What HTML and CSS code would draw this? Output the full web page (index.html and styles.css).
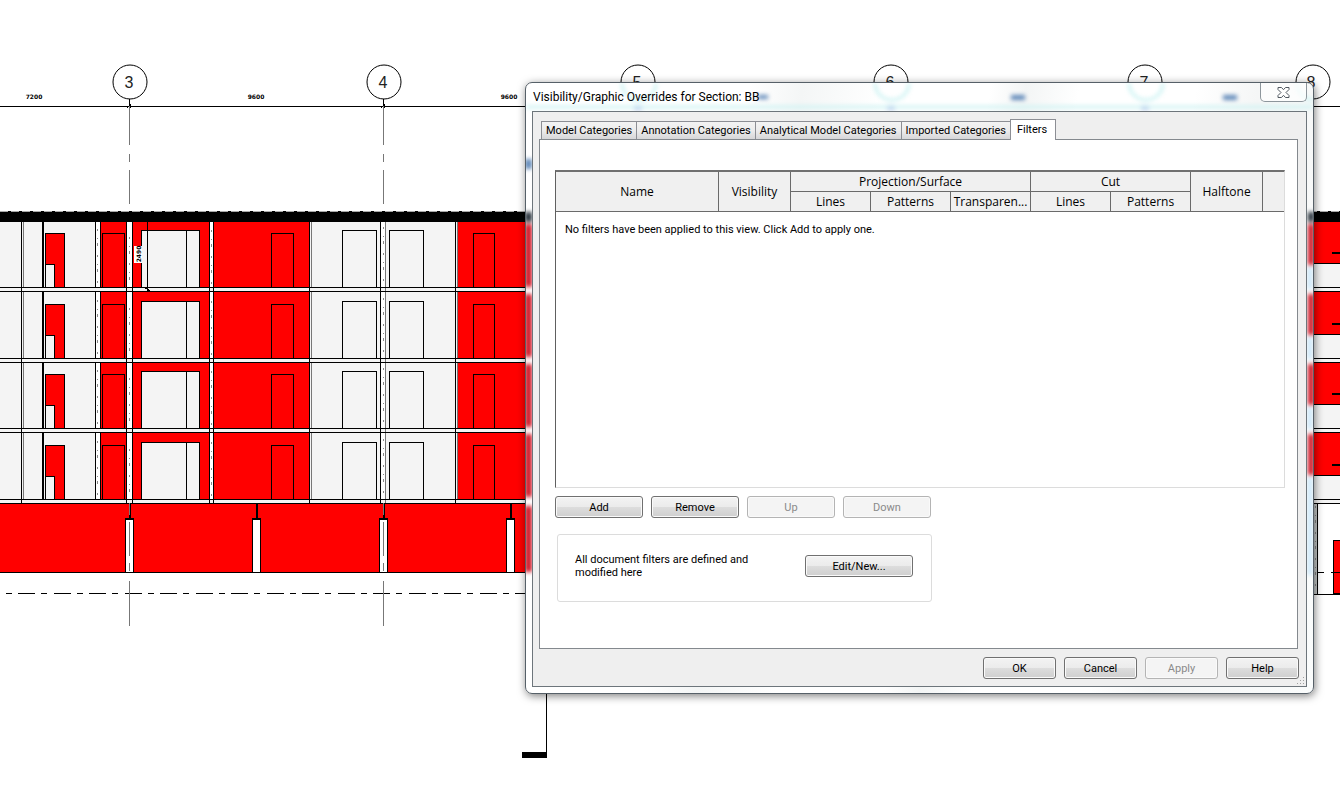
FILE: index.html
```
<!DOCTYPE html>
<html lang="en">

<head>
    <meta charset="UTF-8">
    <meta name="viewport" content="width=device-width, initial-scale=1.0">
    <title>Visibility/Graphic Overrides for Section: BB</title>
    <link rel="stylesheet" href="styles.css">
</head>

<body>
    <svg class="drawing" viewBox="0 0 1340 797" preserveAspectRatio="xMinYMin slice" shape-rendering="crispEdges" aria-label="Section BB">
        <defs>
            <!-- one storey, y=0 is the top of the floor slab -->
            <g id="storey">
                <rect class="wall" x="0" y="-66" width="526" height="70" />
                <path class="red" d="M100 -66h27v66h-27zM132 -66h77v66h-77zM214 -66h95v66h-95zM457 -66h69v66h-69z" />
                <path class="white" d="M96 -66h4v66h-4zM127 -66h5v66h-5zM210 -66h4v66h-4zM380 -66h6v66h-6z" />
                <path class="red line" d="M45.5 .5v-54h19v54zM102.5 .5v-54h22v54z" />
                <path class="wall line" d="M45.5 .5v-23h9v23zM141.5 .5v-57h58v57z" />
                <path class="line" d="M186.5 .5v-57M271.5 .5v-54h22v54M342.5 .5v-57h34v57M389.5 .5v-57h34v57M473.5 .5v-54h21v54" />
                <path class="line" d="M21.5 -66v70M42.5 -66v66M43.5 -66v66M95.5 -66v66M100.5 -66v66M126.5 -66v70M132.5 -66v70M209.5 -66v70M213.5 -66v70M309.5 -66v70M380.5 -66v70M455.5 -66v70" />
                <path class="line grey" d="M23.5 -66v66M311.5 -66v66M385.5 -66v70M457.5 -66v66" />
                <path class="speckle" d="M97.5 -58v54M129.5 -50v50M211.5 -57v56M383.5 -60v58" />
                <path class="line" d="M0 .5h526M0 4.5h526" />
            </g>
            <g id="grid-head">
                <circle class="line" cx="1" cy="0" r="17" shape-rendering="auto" />
                <path class="line" d="M.5 17v13M1.5 22v4M-2 26l4 -4" />
                <path class="grey" d="M.5 24v39M.5 72v8M.5 88v34M.5 421v12M.5 440v34M.5 481v8M.5 499v45" />
            </g>
            <g id="storey-right">
                <rect class="wall" x="1313" y="-66" width="27" height="70" />
                <path class="red line" d="M1312.5 -66.5h30v43h-30z" />
                <path class="line thick" d="M1332 -34h8" />
                <path class="line" d="M1313 .5h27M1313 4.5h27" />
            </g>
            <g id="pile">
                <path class="line thick" d="M1 504v14" />
                <path class="white line" d="M-3.5 519.5h8v53h-8z" />
                <path class="line thick" d="M-4 519h9" />
            </g>
        </defs>

        <use href="#storey" y="499" />
        <use href="#storey" y="428" />
        <use href="#storey" y="358" />
        <use href="#storey" y="287" />
        <use href="#storey-right" y="499" />
        <use href="#storey-right" y="428" />
        <use href="#storey-right" y="358" />
        <use href="#storey-right" y="287" />
        <rect x="0" y="211" width="1340" height="11" />
        <path class="parapet" d="M0 211.5h1340" />

        <!-- basement -->
        <rect class="red" x="0" y="504" width="526" height="68" />
        <path class="line" d="M0 503.5h526M0 572.5h526" />
        <use href="#pile" x="129" />
        <use href="#pile" x="256" />
        <use href="#pile" x="383" />
        <use href="#pile" x="510" />
        <path class="ground" d="M-17.5 593.5h543" />

        <rect class="concrete" x="1313" y="504" width="4" height="90" />
        <path class="speckle" d="M1315.5 506v84" />
        <rect class="red line" x="1333.5" y="540.5" width="10" height="53" />
        <path class="line" d="M1317.5 504v90M1317 572.5h7M1331 572.5h9M1313 594.5h27" />

        <!-- dimensions and grids -->
        <path class="line" d="M0 106.5h1340" />
        <use href="#grid-head" x="129" y="82" />
        <use href="#grid-head" x="383" y="82" />
        <use href="#grid-head" x="637" y="82" />
        <use href="#grid-head" x="890" y="82" />
        <use href="#grid-head" x="1144" y="82" />
        <circle class="line" cx="1313" cy="82" r="17" shape-rendering="auto" />
        <g class="grid-label">
            <text x="129" y="88">3</text>
            <text x="383" y="88">4</text>
            <text x="637" y="88">5</text>
            <text x="890" y="88">6</text>
            <text x="1144" y="88">7</text>
            <text x="1311" y="88">8</text>
        </g>
        <g class="dim-label">
            <text x="34" y="99">7200</text>
            <text x="256" y="99">9600</text>
            <text x="509" y="99">9600</text>
            <path class="line" d="M147.5 222v70M144 287l6 4" />
            <rect class="white" x="134" y="246" width="8" height="17" />
            <text transform="translate(141 254) rotate(-90)">2490</text>
        </g>

        <path class="line" d="M546.5 690v64" />
        <rect x="522" y="752" width="25" height="6" />
    </svg>

    <div class="dialog" role="dialog" aria-labelledby="dialog-title">
        <svg class="glass" viewBox="0 0 787 610" aria-hidden="true">
            <g class="soft">
                <path class="tint-red" d="M-1 141h7v63h-7zM-1 211h7v63h-7zM-1 281h7v63h-7zM-1 351h7v63h-7zM-1 423h7v66h-7zM782 141h6v41h-6zM782 211h6v41h-6zM782 281h6v41h-6zM782 351h6v41h-6z" />
                <path class="tint-black" d="M-1 129h7v10h-7zM782 129h6v10h-6z" />
                <path class="tint-blue" d="M-1 76h7v10h-7zM232 12h10v4h-10zM485 12h14v5h-14zM697 12h14v5h-14z" />
                <path class="tint-violet" d="M108 22h8v5h-8zM361 22h8v5h-8zM615 22h8v5h-8z" />
                <path class="tint-sky" d="M782 184h4v22h-4zM782 254h4v22h-4zM782 324h4v22h-4zM782 394h4v98h-4z" />
                <path class="tint-cyan" d="M0 24h787M96 0a17 17 0 0 0 34 0M349 0a17 17 0 0 0 34 0M603 0a17 17 0 0 0 34 0M771 0a17 17 0 0 0 16 17" />
            </g>
        </svg>
        <div class="titlebar">
            <h1 class="title" id="dialog-title">Visibility/Graphic Overrides for Section: BB</h1>
            <button class="close" type="button" aria-label="Close">
                <svg viewBox="0 0 13 11">
                    <path d="M1 .5h3.500l2 2.200 2-2.200H12V2.500L9 5.500l3 3v2H8.500l-2-2.200-2 2.200H1v-2l3-3-3-3z" />
                </svg>
            </button>
        </div>
        <div class="client">
            <div class="tabs" role="tablist">
                <button class="tab" type="button" role="tab">Model Categories</button>
                <button class="tab" type="button" role="tab">Annotation Categories</button>
                <button class="tab" type="button" role="tab">Analytical Model Categories</button>
                <button class="tab" type="button" role="tab">Imported Categories</button>
                <button class="tab active" type="button" role="tab" aria-selected="true">Filters</button>
            </div>
            <div class="panel" role="tabpanel">
                <table class="filters">
                    <colgroup>
                        <col class="col-name">
                        <col class="col-flag">
                        <col class="col-override" span="5">
                        <col class="col-flag">
                        <col>
                    </colgroup>
                    <thead>
                        <tr>
                            <th rowspan="2">Name</th>
                            <th rowspan="2">Visibility</th>
                            <th colspan="3">Projection/Surface</th>
                            <th colspan="2">Cut</th>
                            <th rowspan="2">Halftone</th>
                            <th rowspan="2"></th>
                        </tr>
                        <tr>
                            <th>Lines</th>
                            <th>Patterns</th>
                            <th>Transparen...</th>
                            <th>Lines</th>
                            <th>Patterns</th>
                        </tr>
                    </thead>
                    <tbody>
                        <tr>
                            <td colspan="9">No filters have been applied to this view. Click Add to apply one.</td>
                        </tr>
                    </tbody>
                </table>
                <div class="actions">
                    <button class="btn" type="button">Add</button>
                    <button class="btn" type="button">Remove</button>
                    <button class="btn" type="button" disabled>Up</button>
                    <button class="btn" type="button" disabled>Down</button>
                </div>
                <div class="group">
                    <p class="hint">All document filters are defined and modified here</p>
                    <button class="btn edit" type="button">Edit/New...</button>
                </div>
            </div>
            <div class="footer">
                <button class="btn" type="button">OK</button>
                <button class="btn" type="button">Cancel</button>
                <button class="btn" type="button" disabled>Apply</button>
                <button class="btn" type="button">Help</button>
            </div>
            <svg class="grip" viewBox="0 0 8 8" shape-rendering="crispEdges" aria-hidden="true">
                <path d="M6 0h1v1h-1zM3 3h1v1h-1zM6 3h1v1h-1zM0 6h1v1h-1zM3 6h1v1h-1zM6 6h1v1h-1z" />
            </svg>
        </div>
    </div>
</body>

</html>
```
FILE: styles.css
```
* {
    box-sizing: border-box;
    margin: 0;
    padding: 0;
}

body {
    min-height: 100vh;
    background-color: #fff;
    font-family: Roboto, Tahoma, sans-serif;
    font-size: 11px;
    line-height: 13px;
    color: #000;
    overflow: hidden;
}

button {
    font: inherit;
    color: inherit;
}

/* Section drawing */
.drawing {
    display: block;
    width: 100%;
    height: 100vh;
}

.line,
.grey,
.speckle,
.parapet,
.ground {
    stroke: #000;
    stroke-width: 1;
}

path.line:not(.red):not(.white):not(.wall),
circle.line,
.grey,
.speckle {
    fill: none;
}

.thick {
    stroke-width: 2;
}

.grey {
    stroke: #777;
}

.red {
    fill: #f00;
}

.wall {
    fill: #f4f4f4;
}

.white {
    fill: #fff;
}

.concrete {
    fill: #c4c8c8;
}

.speckle {
    stroke: #888;
    stroke-dasharray: 2 7 1 4 3 9;
}

.parapet {
    stroke: #aaa;
    stroke-dasharray: 8 3;
}

.ground {
    stroke-dasharray: 17 6 6 6.5;
}

.grid-label {
    font-family: "Liberation Sans", Arial, sans-serif;
    font-size: 16px;
    text-anchor: middle;
    fill: #222;
}

.dim-label {
    font-family: "DejaVu Sans", Verdana, sans-serif;
    font-size: 6px;
    font-weight: bold;
    text-anchor: middle;
}

/* Dialog window */
.dialog {
    position: absolute;
    top: 82px;
    left: 525px;
    width: 789px;
    padding: 0 6px 6px;
    border: 1px solid #566068;
    border-radius: 7px;
    background: linear-gradient(100deg, #fff 0%, #fff 25%, #f4f6f6 31%, #fff 40%, #fff 52%, #f3f5f5 56%, #fff 62%, #fff 75%, #f5f6f6 82%, #fafcfc 100%);
    box-shadow: 1px 2px 8px rgba(0, 0, 0, 0.5);
}

.glass {
    position: absolute;
    inset: 0;
    width: 100%;
    height: 100%;
    border-radius: 6px;
}

.soft {
    filter: blur(2px);
}

.tint-red {
    fill: #d01020;
}

.tint-black {
    fill: #222c36;
}

.tint-blue {
    fill: #5f88b8;
}

.tint-violet {
    fill: #a9b4e8;
}

.tint-sky {
    fill: #c4e4fa;
}

.tint-cyan {
    fill: none;
    stroke: #cdf3f3;
    stroke-width: 3;
}

.titlebar {
    position: relative;
    display: flex;
    justify-content: space-between;
    align-items: flex-start;
    height: 28px;
}

.title {
    padding-left: 1px;
    font-size: 12px;
    font-weight: normal;
    line-height: 28px;
}

.close {
    display: flex;
    align-items: center;
    justify-content: center;
    width: 47px;
    height: 19px;
    border: 1px solid #8d969c;
    border-top: 0;
    border-radius: 0 0 5px 5px;
    background: rgba(255, 255, 255, 0.7);
}

.close svg {
    width: 13px;
    height: 11px;
    fill: #fff;
    stroke: #505860;
}

.client {
    position: relative;
    padding: 7px 7px 7px 6px;
    border: 1px solid #6d757b;
    background-color: #efefef;
}

.tabs {
    display: flex;
    align-items: flex-end;
    height: 21px;
    margin-bottom: -1px;
    padding-left: 2px;
    position: relative;
}

.tab {
    height: 18px;
    margin-bottom: 1px;
    padding: 0 4px;
    border: 1px solid #8c8e94;
    border-width: 1px 0 0 1px;
    background: linear-gradient(#f3f3f3, #ececec 50%, #d6d6d8);
    white-space: nowrap;
}

.tab.active {
    height: 21px;
    margin-bottom: 0;
    padding: 0 8px 2px 6px;
    border-width: 1px 1px 0;
    background: #fff;
}

.panel {
    margin-right: 1px;
    padding: 30px 12px 46px 15px;
    border: 1px solid #84898e;
    background-color: #fff;
}

.filters {
    width: 100%;
    table-layout: fixed;
    border: 1px solid #dcdcdc;
    border-top: 2px solid #707070;
    border-left-color: #606060;
    border-spacing: 0;
}

.col-name {
    width: 163px;
}

.col-flag {
    width: 72px;
}

.col-override {
    width: 80px;
}

.filters th {
    height: 20px;
    border-right: 1px solid #6a6a6a;
    border-bottom: 1px solid #6a6a6a;
    background-color: #f0f0f0;
    font-family: "Open Sans", "Segoe UI", sans-serif;
    font-size: 12px;
    font-weight: normal;
    line-height: 19px;
    white-space: nowrap;
}

.filters th:last-child[rowspan] {
    border-right: 0;
}

.filters td {
    height: 275px;
    padding: 11px 9px;
    vertical-align: top;
}

.actions {
    display: flex;
    gap: 8px;
    margin-top: 8px;
}

.btn {
    width: 88px;
    height: 22px;
    border: 1px solid #707070;
    border-radius: 3px;
    background: linear-gradient(#f3f3f3, #ebebeb 50%, #dddddd 50%, #cfcfcf);
    box-shadow: inset 0 0 0 1px #fafafa;
}

.btn:disabled {
    border-color: #b4b4b4;
    background: #f4f4f4;
    color: #8a8a8a;
}

.group {
    display: flex;
    align-items: flex-start;
    justify-content: space-between;
    width: 375px;
    min-height: 68px;
    margin: 16px 0 0 2px;
    padding: 18px 18px 20px 17px;
    border: 1px solid #dcdcdc;
    border-radius: 3px;
}

.hint {
    width: 190px;
}

.edit {
    width: 108px;
    margin-top: 2px;
}

.footer {
    display: flex;
    justify-content: flex-end;
    gap: 8px;
    padding-top: 8px;
}

.footer .btn {
    width: 73px;
}

.grip {
    position: absolute;
    right: 1px;
    bottom: 1px;
    width: 8px;
    height: 8px;
    fill: #a0a0a0;
}
```
